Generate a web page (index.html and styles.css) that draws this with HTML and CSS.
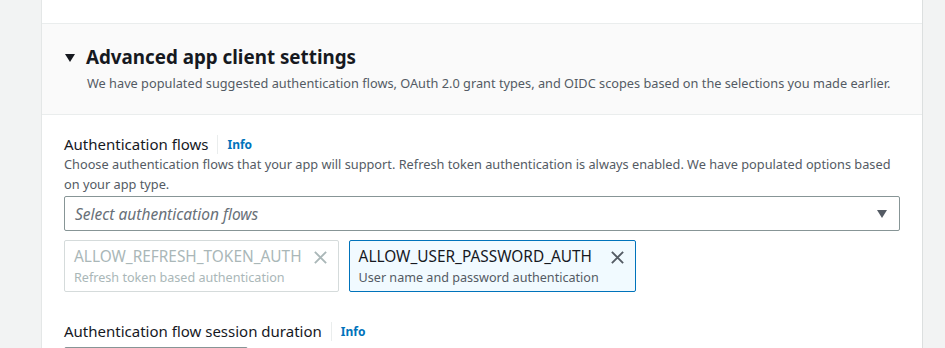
FILE: index.html
```
<!DOCTYPE html>
<html lang="en">
<head>
  <meta charset="UTF-8">
  <meta name="viewport" content="width=device-width, initial-scale=1">
  <title>App client settings</title>
  <link rel="stylesheet" href="styles.css">
</head>
<body>

<div class="page">
  <div class="card">
    <div class="card-top"></div>

    <div class="expand-header">
      <div class="expand-title">
        <span class="caret-down"></span>
        <h2>Advanced app client settings</h2>
      </div>
      <p class="expand-desc">We have populated suggested authentication flows, OAuth 2.0 grant types, and OIDC scopes based on the selections you made earlier.</p>
    </div>

    <div class="expand-body">
      <div class="field">
        <div class="field-label">
          <span>Authentication flows</span>
          <a class="info" href="#">Info</a>
        </div>
        <p class="field-desc">Choose authentication flows that your app will support. Refresh token authentication is always enabled. We have populated options based on your app type.</p>
        <div class="select">
          <span class="placeholder">Select authentication flows</span>
          <span class="select-caret"></span>
        </div>
        <div class="tokens">
          <div class="token disabled">
            <div class="token-text">
              <div class="token-name">ALLOW_REFRESH_TOKEN_AUTH</div>
              <div class="token-sub">Refresh token based authentication</div>
            </div>
            <svg class="token-x" viewBox="0 0 16 16"><path d="M2 2l12 12M14 2L2 14"/></svg>
          </div>
          <div class="token">
            <div class="token-text">
              <div class="token-name">ALLOW_USER_PASSWORD_AUTH</div>
              <div class="token-sub">User name and password authentication</div>
            </div>
            <svg class="token-x" viewBox="0 0 16 16"><path d="M2 2l12 12M14 2L2 14"/></svg>
          </div>
        </div>
      </div>

      <div class="field">
        <div class="field-label">
          <span>Authentication flow session duration</span>
          <a class="info" href="#">Info</a>
        </div>
        <div class="input-stub"></div>
      </div>
    </div>
  </div>
</div>

</body>
</html>
```

FILE: styles.css
```
* { box-sizing: border-box; }
body {
  margin: 0;
  background: #f2f3f3;
  font-family: "Noto Sans", "Open Sans", sans-serif;
  color: #16191f;
  overflow: hidden;
}
.page {
  padding-left: 41px;
  width: 923px;
}
.card {
  background: #fff;
  border-left: 1px solid #e4e7e7;
  border-right: 1px solid #dcdfdf;
  height: 348px;
  overflow: hidden;
}
.card-top {
  height: 24px;
  border-bottom: 1px solid #eaeded;
}
.expand-header {
  background: #fafafa;
  border-bottom: 1px solid #eaeded;
  padding: 21px 20px 22px 23px;
}
.expand-title {
  display: flex;
  align-items: center;
  gap: 11px;
}
.caret-down {
  width: 0;
  height: 0;
  border-left: 5.5px solid transparent;
  border-right: 5.5px solid transparent;
  border-top: 8px solid #16191f;
  margin-top: 1px;
}
.expand-title h2 {
  margin: 0;
  font-size: 18.8px;
  line-height: 24px;
  font-weight: 700;
}
.expand-desc {
  margin: 5px 0 0 22px;
  font-size: 12.75px;
  line-height: 18px;
  color: #545b64;
}
.expand-body {
  padding: 18px 22px 0 22px;
}
.field {
  margin-bottom: 28px;
}
.field-label {
  display: flex;
  align-items: center;
  font-size: 15px;
  line-height: 22px;
}
.info {
  margin-left: 9px;
  padding-left: 9px;
  border-left: 1px solid #eaeded;
  font-size: 12px;
  line-height: 19px;
  font-weight: 700;
  color: #0073bb;
  text-decoration: none;
}
.field-desc {
  margin: 0;
  font-size: 12.75px;
  line-height: 19.5px;
  color: #545b64;
  padding-right: 6px;
}
.select {
  margin-top: 2px;
  height: 35px;
  border: 1px solid #879596;
  border-radius: 2px;
  display: flex;
  align-items: center;
  justify-content: space-between;
  padding: 0 12px 0 10px;
}
.placeholder {
  font-size: 15.5px;
  font-style: italic;
  color: #687078;
}
.select-caret {
  width: 0;
  height: 0;
  border-left: 5.5px solid transparent;
  border-right: 5.5px solid transparent;
  border-top: 8px solid #545b64;
}
.tokens {
  display: flex;
  gap: 10px;
  margin-top: 9px;
}
.token {
  display: flex;
  align-items: flex-start;
  gap: 11px;
  height: 52px;
  padding: 4px 10px 0 9px;
  border: 1px solid #0073bb;
  border-radius: 2px;
  background: #f1faff;
}
.token-name {
  font-size: 15.4px;
  line-height: 23px;
}
.token-sub {
  font-size: 12.6px;
  line-height: 20px;
  color: #545b64;
}
.token-x {
  width: 15px;
  height: 15px;
  margin-top: 5px;
  fill: none;
  stroke: #545b64;
  stroke-width: 2;
}
.token.disabled {
  border-color: #d5dbdb;
  background: #fff;
}
.token.disabled .token-name,
.token.disabled .token-sub {
  color: #aab7b8;
}
.token.disabled .token-x {
  stroke: #aab7b8;
}
.input-stub {
  margin-top: 5px;
  width: 184px;
  height: 34px;
  border: 1px solid #879596;
  border-radius: 2px;
}
```
